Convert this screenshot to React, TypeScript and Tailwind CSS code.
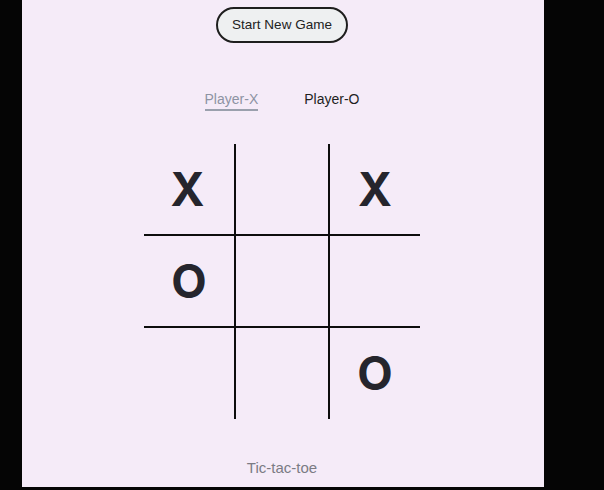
import React from "react";

const board: (string | null)[] = ["X", null, "X", "O", null, null, null, null, "O"];

export default function App() {
  return (
    <div className="w-[604px] h-[490px] bg-[#050505] overflow-hidden">
      <div
        className="ml-[22px] w-[522px] h-[487px] bg-[#f5ebf8] flex flex-col items-center"
        style={{ fontFamily: '"Liberation Sans", Arial, sans-serif' }}
      >
        <button className="mt-[7px] ml-[-2px] w-[132px] h-[36px] rounded-full border-2 border-[#1e1e1e] bg-[#eef0f1] text-[13.5px] text-[#222222] flex items-center justify-center">
          Start New Game
        </button>

        <div className="mt-[48px] ml-[-2px] flex items-start gap-[46px] text-[14px] leading-[16px]">
          <div className="text-[#8d93a3] border-b-2 border-[#9aa0ad] pb-[2px]">Player-X</div>
          <div className="text-[#1f1f1f]">Player-O</div>
        </div>

        <div
          className="mt-[33px] ml-[-2px] grid grid-cols-[92px_94px_90px] grid-rows-[92px_92px_91px]"
          style={{ fontFamily: 'Inter, "Noto Sans", sans-serif' }}
        >
          {board.map((v, i) => {
            const col = i % 3;
            const row = Math.floor(i / 3);
            const cls = [
              "flex items-center justify-center text-[46px] font-bold text-[#25252d]",
              col < 2 ? "border-r-2 border-r-[#0d0d0d]" : "",
              row < 2 ? "border-b-2 border-b-[#0d0d0d]" : "",
              col === 0 && v === "X" ? "pr-[3px]" : "",
            ].join(" ");
            return (
              <div key={i} className={cls}>
                {v}
              </div>
            );
          })}
        </div>

        <div className="mt-[39px] ml-[-2px] text-[15px] leading-[20px] text-[#7b7b84]">Tic-tac-toe</div>
      </div>
    </div>
  );
}
